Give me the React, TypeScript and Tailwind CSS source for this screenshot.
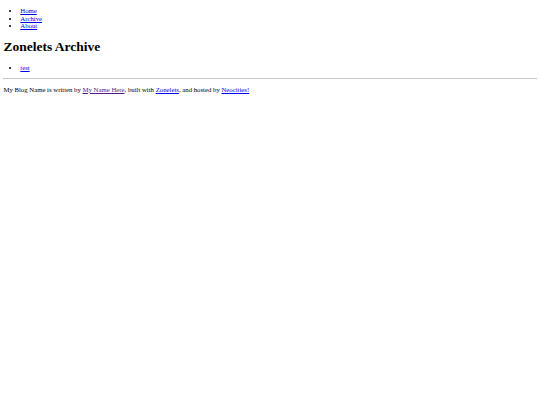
import * as React from "react";

const navLinks = ["Home", "Archive", "About"];

function Link({ children, visited }: { children: React.ReactNode; visited?: boolean }) {
  return (
    <a href="#" className={visited ? "text-[#551a8b] underline" : "text-[#0000ee] underline"}>
      {children}
    </a>
  );
}

export default function App() {
  return (
    <div className="min-h-[405px] bg-white px-[3.4px] pt-[6.75px] font-['Liberation_Serif',serif] text-[6.75px] leading-[7.76px] text-black">
      <ul className="list-disc pl-[16.9px]">
        {navLinks.map((l) => (
          <li key={l}>
            <Link>{l}</Link>
          </li>
        ))}
      </ul>
      <h1 className="mt-[9.05px] text-[13.5px] font-bold leading-[15.5px]">Zonelets Archive</h1>
      <ul className="mt-[9.05px] list-disc pl-[16.9px]">
        <li>
          <Link>test</Link>
        </li>
      </ul>
      <div className="mt-[6.75px] border-t border-[#c8c8c8]" />
      <p className="mt-[6.75px]">
        My Blog Name is written by <Link visited>My Name Here</Link>, built with <Link>Zonelets</Link>, and
        hosted by <Link>Neocities!</Link>
      </p>
    </div>
  );
}
